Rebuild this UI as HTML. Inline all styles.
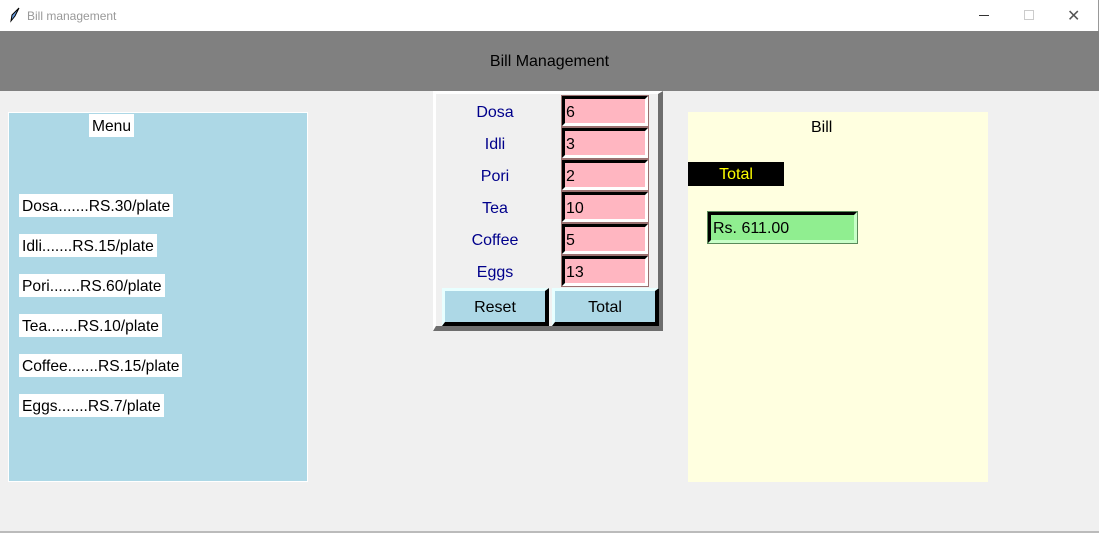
<!DOCTYPE html>
<html><head><style>
*{margin:0;padding:0;box-sizing:border-box}
body{width:1099px;height:533px;background:#f0f0f0;position:relative;overflow:hidden;font-family:"Liberation Sans",Arial,sans-serif;font-size:16px}
.a{position:absolute}
.lbl{background:#fff;color:#000;padding:0 3px;height:23px;line-height:25px;font-size:15.6px}
.ent{position:absolute;left:562px;width:86px;height:30px;background:#ffb6c1;border-top:3px solid #000;border-left:3px solid #000;border-right:3px solid #fff;border-bottom:3px solid #fff;font-size:16px;line-height:27px;padding-left:1px;outline:1px solid #9a7070}
.fl{position:absolute;left:440px;width:110px;text-align:center;color:#00008b;font-size:16px}
.btn{position:absolute;top:288px;height:38px;background:#add8e6;border-top:3px solid #e8ffff;border-left:3px solid #e8ffff;border-right:4px solid #000;border-bottom:4px solid #000;text-align:center;line-height:34px}
</style></head><body>
<div class="a" style="left:0;top:0;width:1099px;height:31px;background:#fff;border-right:1px solid #999"></div>
<svg class="a" style="left:9px;top:7px" width="12" height="16"><path d="M10 1 L3 8 L2 14 L6 9 Z" fill="#6a9ee0" stroke="#000" stroke-width="1"/></svg>
<div class="a" style="left:27px;top:9px;font-size:12px;color:#999">Bill management</div>
<div class="a" style="left:979px;top:15px;width:10px;height:1px;background:#333"></div>
<div class="a" style="left:1024px;top:10px;width:10px;height:10px;border:1px solid #ccc"></div>
<div class="a" style="left:1067px;top:6px;font-size:16px;color:#555">✕</div>
<div class="a" style="left:0;top:31px;width:1099px;height:60px;background:#808080"></div>
<div class="a" style="left:0;top:53px;width:1099px;text-align:center;color:#000;font-size:16px;">Bill Management</div>

<div class="a" style="left:8px;top:112px;width:300px;height:370px;background:#add8e6;border:1px solid #fff"></div>
<div class="a lbl" style="left:89px;top:114px;">Menu</div>
<div class="a lbl" style="left:19px;top:194px">Dosa.......RS.30/plate</div>
<div class="a lbl" style="left:19px;top:234px">Idli.......RS.15/plate</div>
<div class="a lbl" style="left:19px;top:274px">Pori.......RS.60/plate</div>
<div class="a lbl" style="left:19px;top:314px">Tea.......RS.10/plate</div>
<div class="a lbl" style="left:19px;top:354px">Coffee.......RS.15/plate</div>
<div class="a lbl" style="left:19px;top:394px">Eggs.......RS.7/plate</div>

<div class="a" style="left:433px;top:91px;width:230px;height:240px;border-top:3px solid #fff;border-left:3px solid #fff;border-right:5px solid #6e6e6e;border-bottom:5px solid #6e6e6e;background:#f0f0f0"></div>
<div class="fl" style="top:104px">Dosa</div>
<div class="fl" style="top:136px">Idli</div>
<div class="fl" style="top:168px">Pori</div>
<div class="fl" style="top:200px">Tea</div>
<div class="fl" style="top:232px">Coffee</div>
<div class="fl" style="top:264px">Eggs</div>
<div class="ent" style="top:96px">6</div>
<div class="ent" style="top:128px">3</div>
<div class="ent" style="top:160px">2</div>
<div class="ent" style="top:192px">10</div>
<div class="ent" style="top:224px">5</div>
<div class="ent" style="top:256px">13</div>
<div class="btn" style="left:442px;width:107px">Reset</div>
<div class="btn" style="left:552px;width:107px">Total</div>

<div class="a" style="left:688px;top:112px;width:300px;height:370px;background:#ffffe0"></div>
<div class="a" style="left:811px;top:119px">Bill</div>
<div class="a" style="left:688px;top:162px;width:96px;height:24px;background:#000;color:#ffff00;text-align:center;line-height:26px">Total</div>
<div class="a" style="left:708px;top:212px;width:149px;height:31px;background:#90ee90;border-top:3px solid #000;border-left:3px solid #000;border-right:3px solid #c8ffc8;border-bottom:3px solid #c8ffc8;outline:1px solid #5a8a5a;line-height:27px;padding-left:2px">Rs. 611.00</div>
<div class="a" style="left:0;top:531px;width:1099px;height:2px;background:#bbb"></div>
</body></html>
